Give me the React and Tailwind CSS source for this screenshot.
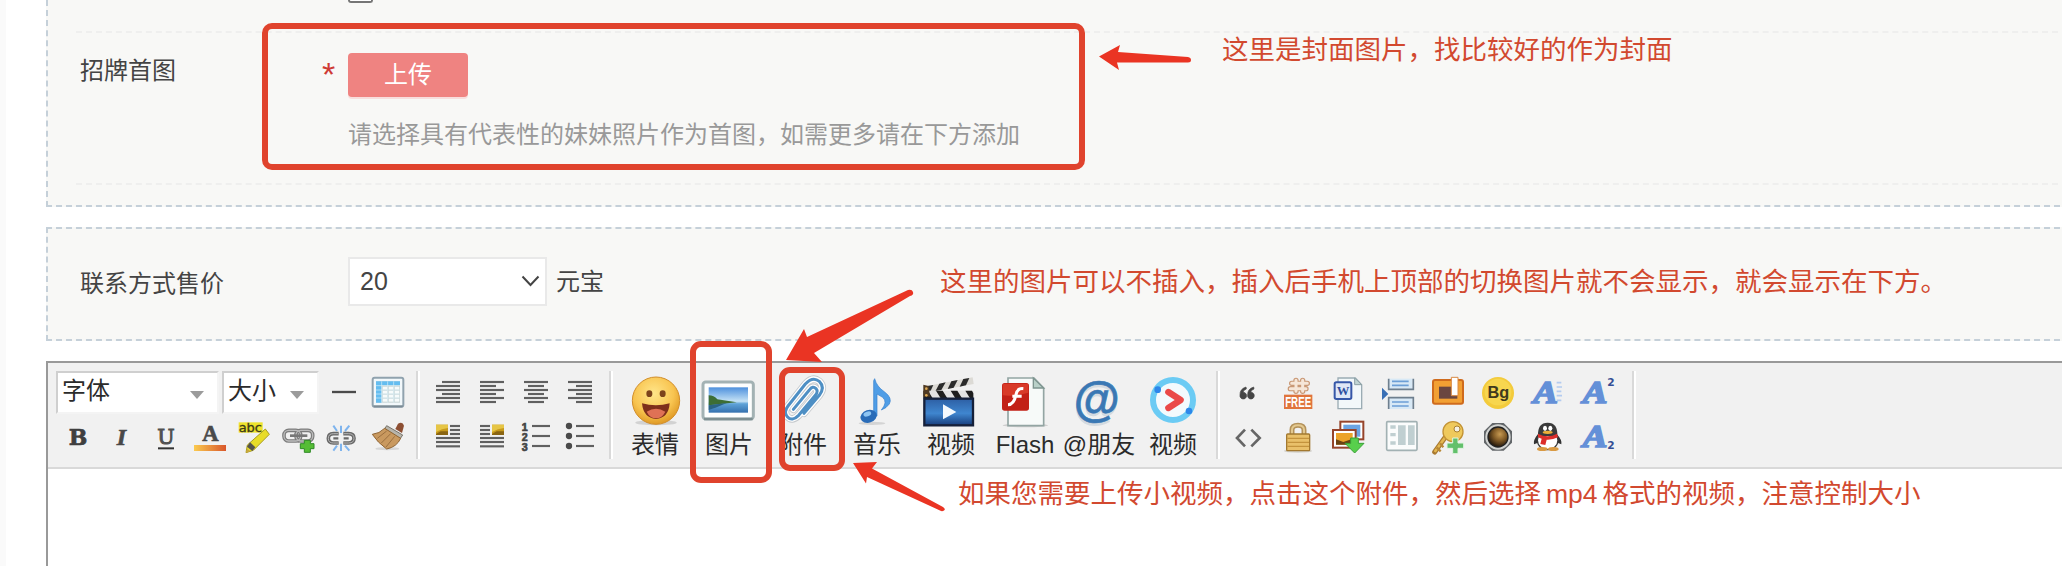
import React from "react";

function Cell({ box, w = "w-11", children }) {
  return (
    <button type="button" className={`${w} h-11 shrink-0`}>
      <svg viewBox={box} className="block h-full w-full">
        {children}
      </svg>
    </button>
  );
}

function BigButton({ label, box, children }) {
  return (
    <button type="button" className="flex w-[74px] shrink-0 flex-col items-center">
      <svg viewBox={box} className="block h-[58px] w-[74px]">
        {children}
      </svg>
      <span className="whitespace-nowrap text-2xl leading-[31px] text-[#2b2b2b]">{label}</span>
    </button>
  );
}

function Separator({ className }) {
  return <div className={`h-[88px] w-1 shrink-0 border-l-2 border-r-2 border-l-[#d9d9d9] border-r-white ${className}`} />;
}

function Combo({ label, className }) {
  return (
    <div
      className={`flex h-[43px] shrink-0 items-center justify-between border-2 border-b-[#f4f4f4] border-l-[#cfcfcf] border-r-[#f4f4f4] border-t-[#cfcfcf] bg-white pl-1 pr-[13px] ${className}`}
    >
      <span className="-mt-1 text-2xl leading-8 text-[#2b2b2b]">{label}</span>
      <svg viewBox="0 0 14 8" className="mt-1 h-2 w-3.5">
        <path d="M0 0H14L7 8Z" fill="#9b9b9b" />
      </svg>
    </div>
  );
}

function Lines({ rows }) {
  return rows.map(([x1, x2, y]) => (
    <path key={`${x1}-${y}`} d={`M${x1} ${y}H${x2}`} stroke="#606060" strokeWidth="6.5" />
  ));
}

const serif = "DejaVu Serif, serif";

function TextTools() {
  return (
    <div className="flex flex-col">
      <div className="flex h-11">
        <Combo label="字体" className="w-[163px]" />
        <Combo label="大小" className="ml-[3px] w-[97px]" />
        <div className="ml-[3px] flex">
          <Cell box="846 48 132 132">
            <path d="M876 111H948" stroke="#4b4b4b" strokeWidth="7" />
          </Cell>
          <Cell box="978 48 132 132">
            <rect x="998" y="68" width="92" height="87" rx="6" fill="#f2f8fb" stroke="#90a2ae" strokeWidth="6" />
            <path d="M1001 154H1088" stroke="#7c8b95" strokeWidth="6" />
            <rect x="1008" y="79" width="72" height="64" fill="#c6d3d3" />
            <path d="M1008 79H1080V91H1025V143H1008Z" fill="#64bdf0" />
            {[1028, 1046, 1064].map((x) =>
              [95, 107, 119, 131].map((y) => <rect key={`${x}${y}`} x={x} y={y} width="14" height="9" fill="#f7fbfb" />)
            )}
            <path d="M1025 79V143M1043 79V143M1061 79V143M1008 92H1080M1008 105H1080M1008 117H1080M1008 129H1080" stroke="#d8eef8" strokeWidth="2" />
          </Cell>
        </div>
      </div>
      <div className="flex h-11">
        <Cell box="48 180 132 132">
          <text x="114" y="270" fontSize="66" fontWeight="700" fontFamily={serif} textAnchor="middle" fill="#3f3f3f" stroke="#3f3f3f" strokeWidth="2">B</text>
        </Cell>
        <Cell box="180 180 132 132">
          <text x="244" y="270" fontSize="72" fontStyle="italic" fontWeight="700" fontFamily="Liberation Serif, serif" textAnchor="middle" fill="#484848" stroke="#484848" strokeWidth="2">I</text>
        </Cell>
        <Cell box="312 180 132 132">
          <text x="378" y="268" fontSize="62" fontFamily={serif} textAnchor="middle" fill="#505050" stroke="#505050" strokeWidth="3">U</text>
          <path d="M354 280H402" stroke="#333" strokeWidth="6" />
        </Cell>
        <Cell box="444 180 132 132">
          <defs>
            <linearGradient id="ink">
              <stop stopColor="#fbcb4f" />
              <stop offset="1" stopColor="#d9572b" />
            </linearGradient>
          </defs>
          <text x="511" y="259" fontSize="68" fontWeight="700" fontFamily="Liberation Serif, serif" textAnchor="middle" fill="#4a4a4a" stroke="#4a4a4a" strokeWidth="2">A</text>
          <rect x="462" y="270" width="96" height="18" fill="url(#ink)" />
        </Cell>
        <Cell box="576 180 132 132">
          <path d="M596 202H668V233H596Z" fill="#efe32c" />
          <text x="631" y="232" fontSize="38" fontFamily="DejaVu Sans, sans-serif" textAnchor="middle" fill="#3d3a18" stroke="#3d3a18" textLength="70" lengthAdjust="spacingAndGlyphs">abc</text>
          <path d="M676 222L688 238L640 286L618 293L622 270Z" fill="#e8dc28" stroke="#a89d22" strokeWidth="3" />
          <path d="M630 262L646 277L637 288L621 275Z" fill="#55534d" />
          <path d="M618 293L622 281L631 289Z" fill="#c9a640" />
        </Cell>
        <Cell box="708 180 132 132">
          <g fill="none">
            <rect x="732" y="226" width="50" height="32" rx="14" stroke="#7c7c7c" strokeWidth="11" />
            <rect x="768" y="226" width="50" height="32" rx="14" stroke="#7c7c7c" strokeWidth="11" />
            <rect x="732" y="226" width="50" height="32" rx="14" stroke="#bcbcbc" strokeWidth="4" />
            <rect x="768" y="226" width="50" height="32" rx="14" stroke="#bcbcbc" strokeWidth="4" />
            <path d="M750 242H802" stroke="#777" strokeWidth="8" />
          </g>
          <path d="M793 256H811V266H822V281H811V292H793V281H781V266H793Z" fill="#55bd35" stroke="#2f8a26" strokeWidth="3" />
        </Cell>
        <Cell box="840 180 132 132">
          <path d="M903 234V212M891 228L880 212M915 228L928 212M903 266V288M891 272L880 287M915 272L928 287" stroke="#7eb4ee" strokeWidth="6" />
          <g fill="none" stroke="#686868" strokeWidth="11">
            <path d="M896 236H880Q865 236 865 250T880 264H896M910 236H926Q942 236 942 250T926 264H910" />
            <path d="M880 250H895M911 250H926" strokeWidth="7" />
          </g>
          <path d="M894 236H880Q865 236 865 250T880 264H894M912 236H926Q942 236 942 250T926 264H912" fill="none" stroke="#b5b5b5" strokeWidth="3" />
        </Cell>
        <Cell box="972 180 132 132">
          <ellipse cx="1042" cy="281" rx="36" ry="5" fill="#d6d6d6" />
          <path d="M1066 222L1074 206Q1088 198 1092 212L1086 234Z" fill="#8d4f33" />
          <path d="M1040 212L1088 240L1080 252L1034 222Z" fill="#b8b5ab" stroke="#77736a" strokeWidth="3" />
          <path d="M1034 220L1082 250Q1070 276 1040 282Q1012 262 997 238Q1018 236 1034 220Z" fill="#c9995f" stroke="#8f6433" strokeWidth="3" />
          <path d="M1040 228L1012 250M1052 236L1024 264M1064 244L1038 276" stroke="#9c7040" strokeWidth="3" />
        </Cell>
      </div>
    </div>
  );
}

function ImageThumb({ x }) {
  return (
    <>
      <rect x={x} y="284" width="36" height="31" fill="#c79a1c" />
      <path d={`M${x} 284H${x + 36}V294L${x + 18} 298L${x} 306Z`} fill="#e6c545" />
      <path d={`M${x} 312L${x + 14} 304H${x + 36}V315H${x}Z`} fill="#8a6512" />
    </>
  );
}

function ParagraphTools() {
  return (
    <div className="flex flex-col">
      <div className="flex h-11">
        <Cell box="78 123 132 132">
          <Lines rows={[[126, 180, 156], [108, 180, 168], [108, 180, 180], [126, 180, 192], [108, 180, 204], [108, 180, 216]]} />
        </Cell>
        <Cell box="210 123 132 132">
          <Lines rows={[[240, 312, 156], [240, 288, 168], [240, 312, 180], [240, 288, 192], [240, 312, 204], [240, 288, 216]]} />
        </Cell>
        <Cell box="342 123 132 132">
          <Lines rows={[[372, 444, 156], [384, 432, 168], [372, 444, 180], [384, 432, 192], [372, 444, 204], [384, 432, 216]]} />
        </Cell>
        <Cell box="474 123 132 132">
          <Lines rows={[[504, 576, 156], [528, 576, 168], [504, 576, 180], [528, 576, 192], [504, 576, 204], [528, 576, 216]]} />
        </Cell>
      </div>
      <div className="flex h-11">
        <Cell box="78 255 132 132">
          <ImageThumb x={108} />
          <Lines rows={[[150, 180, 288], [150, 180, 300], [150, 180, 312], [108, 180, 324], [108, 180, 336], [108, 180, 349]]} />
        </Cell>
        <Cell box="210 255 132 132">
          <ImageThumb x={276} />
          <Lines rows={[[240, 270, 288], [240, 270, 300], [240, 270, 312], [240, 312, 324], [240, 312, 336], [240, 312, 349]]} />
        </Cell>
        <Cell box="342 255 132 132">
          <g fontSize="32" fontWeight="700" fontFamily="Liberation Sans, sans-serif" fill="#444" stroke="#444" strokeWidth="2">
            <text x="365" y="302">1</text>
            <text x="365" y="332">2</text>
            <text x="365" y="362">3</text>
          </g>
          <Lines rows={[[396, 450, 288], [396, 450, 318], [396, 450, 348]]} />
        </Cell>
        <Cell box="474 255 132 132">
          {[288, 318, 348].map((y) => (
            <circle key={y} cx="507" cy={y} r="9.5" fill="#4a4a4a" />
          ))}
          <Lines rows={[[528, 582, 288], [528, 582, 318], [528, 582, 348]]} />
        </Cell>
      </div>
    </div>
  );
}

const clip =
  "M520 238L568 180Q578 166 588 176Q596 184 586 196L536 256Q516 276 502 260Q490 246 504 228L556 162Q578 138 598 154Q616 172 598 196L552 250";

function MediaTools() {
  return (
    <div className="flex">
      <BigButton label="表情" box="-6 123 222 174">
        <defs>
          <radialGradient id="face" cx=".45" cy=".35" r=".65">
            <stop stopColor="#ffe68a" />
            <stop offset=".65" stopColor="#f8c450" />
            <stop offset="1" stopColor="#e09a25" />
          </radialGradient>
        </defs>
        <ellipse cx="108" cy="278" rx="62" ry="8" fill="#d2d2d2" />
        <circle cx="108" cy="212" r="71" fill="url(#face)" stroke="#d28e2a" strokeWidth="3" />
        <ellipse cx="88" cy="191" rx="9" ry="10" fill="#7c431b" />
        <ellipse cx="128" cy="191" rx="9" ry="10" fill="#7c431b" />
        <path d="M66 220Q108 232 149 220Q146 264 108 267Q70 264 66 220Z" fill="#7e2f1b" />
        <path d="M80 245Q108 228 136 245Q126 265 108 265Q90 265 80 245Z" fill="#df7155" />
      </BigButton>
      <BigButton label="图片" box="216 123 222 174">
        <defs>
          <linearGradient id="sky" x2="0" y2="1">
            <stop stopColor="#4d90dd" />
            <stop offset=".55" stopColor="#c5e2f5" />
            <stop offset=".65" stopColor="#5fa3d8" />
            <stop offset="1" stopColor="#3470ae" />
          </linearGradient>
        </defs>
        <rect x="249" y="156" width="151" height="111" rx="8" fill="#fdfefe" stroke="#a3b2b4" strokeWidth="9" />
        <path d="M252 267H398" stroke="#7e8f92" strokeWidth="7" />
        <rect x="266" y="172" width="118" height="76" fill="url(#sky)" />
        <path d="M266 196Q282 196 292 208L350 217L266 226Z" fill="#3d6e35" />
        <path d="M266 226L320 219L290 232L266 240Z" fill="#2b6385" />
      </BigButton>
      <BigButton label="附件" box="438 123 222 174">
        <g fill="none" strokeLinecap="round" strokeLinejoin="round">
          <path d={clip} stroke="#c4c8cc" strokeWidth="22" />
          <path d={clip} stroke="#fff" strokeWidth="17" />
          <path d={clip} stroke="#4e8fc4" strokeWidth="9" />
        </g>
      </BigButton>
      <BigButton label="音乐" box="0 273 222 174">
        <ellipse cx="96" cy="430" rx="40" ry="5" fill="#d4d4d4" />
        <path d="M104 296Q110 320 134 336Q158 354 148 372Q140 384 124 390Q144 366 128 352L111 342V408H101V302Z" fill="#4f9de6" stroke="#3581cf" strokeWidth="2" />
        <ellipse cx="86" cy="409" rx="25" ry="19" transform="rotate(-18 86 409)" fill="#2a6cb8" />
        <ellipse cx="82" cy="402" rx="12" ry="7" transform="rotate(-18 82 402)" fill="#8ec5f3" />
      </BigButton>
      <BigButton label="视频" box="222 273 222 174">
        <defs>
          <linearGradient id="clap" x2="0" y2="1">
            <stop stopColor="#2d5fa4" />
            <stop offset=".55" stopColor="#3f86cf" />
            <stop offset="1" stopColor="#173d7c" />
          </linearGradient>
        </defs>
        <path d="M250 320L398 292L401 312L253 340Z" fill="#dcdad5" />
        <path d="M262 318L280 315L270 337L253 340ZM298 311L317 307L304 330L286 334ZM334 304L353 300L341 323L323 327ZM370 297L388 294L378 316L359 320Z" fill="#2b2b2b" />
        <rect x="250" y="332" width="150" height="23" fill="#e2e2e2" />
        <path d="M250 332H264L278 355H250ZM288 332H308L322 355H302ZM332 332H352L366 355H346ZM376 332H396L400 340V355H390Z" fill="#1e1e1e" />
        <path d="M250 314L266 318L270 350H250Z" fill="#4f3a24" />
        <circle cx="259" cy="326" r="4" fill="#dfab55" />
        <circle cx="259" cy="346" r="4" fill="#dfab55" />
        <rect x="253" y="356" width="146" height="80" fill="url(#clap)" stroke="#15203a" strokeWidth="7" />
        <path d="M309 373L349 396L309 418Z" fill="#f4f9fd" />
      </BigButton>
      <BigButton label="Flash" box="444 273 222 174">
        <ellipse cx="556" cy="436" rx="68" ry="6" fill="#cfcfcf" />
        <path d="M504 294H582L611 324V437H504Z" fill="#f7faf9" stroke="#93a5a3" strokeWidth="5" />
        <path d="M580 294V324H611Z" fill="#b9d0c8" stroke="#7d948f" strokeWidth="4" />
        <rect x="486" y="309" width="81" height="83" rx="8" fill="#c22016" />
        <path d="M494 311H560Q565 311 565 318V338Q525 350 488 346V318Q488 311 494 311Z" fill="#d83a28" />
        <path d="M550 326Q532 324 528 344Q522 374 504 374M517 349H545" fill="none" stroke="#fff" strokeWidth="9" />
      </BigButton>
      <BigButton label="@朋友" box="666 273 222 174">
        <text x="770" y="416" fontSize="146" fontWeight="700" fontFamily="Liberation Sans, sans-serif" textAnchor="middle" fill="#d4dbe1" textLength="140" lengthAdjust="spacingAndGlyphs">@</text>
        <text x="770" y="408" fontSize="144" fontWeight="700" fontFamily="Liberation Sans, sans-serif" textAnchor="middle" fill="#3a78b4" stroke="#3a78b4" strokeWidth="2" textLength="138" lengthAdjust="spacingAndGlyphs">@</text>
      </BigButton>
      <BigButton label="视频" box="888 273 222 174">
        <circle cx="999" cy="360" r="60" fill="#f3fafd" stroke="#6bcbf4" strokeWidth="18" />
        <circle cx="953" cy="329" r="10" fill="#2d87ea" />
        <circle cx="1047" cy="393" r="10" fill="#2d87ea" />
        <path d="M985 336L1022 360L985 384" fill="none" stroke="#ea4a49" strokeWidth="19" strokeLinecap="round" strokeLinejoin="round" />
      </BigButton>
    </div>
  );
}

function StyledA({ x = 0, y = 0 }) {
  return (
    <text x={525 + x} y={128 + y} fontSize="94" fontWeight="700" fontStyle="italic" fontFamily="Liberation Serif, serif" textAnchor="middle" fill="#6490d8" stroke="#6490d8" strokeWidth="5" textLength="74" lengthAdjust="spacingAndGlyphs">
      A
    </text>
  );
}

function PluginTools() {
  return (
    <div className="flex flex-col">
      <div className="flex h-11">
        <Cell w="w-[50px]" box="6 33 150 132">
          <path d="M78 81Q59 87 60 105A10 10 0 1 0 69 97Q70 90 79 87ZM101 81Q82 87 83 105A10 10 0 1 0 92 97Q93 90 102 87Z" fill="#454545" stroke="#454545" strokeWidth="2" />
        </Cell>
        <Cell w="w-[50px]" box="156 33 150 132">
          <g fill="none" stroke="#c99875" strokeWidth="16" strokeLinecap="round">
            <path d="M228 61V94M248 61V94M215 70H262M211 86H258" />
          </g>
          <g fill="none" stroke="#f6e6d8" strokeWidth="9" strokeLinecap="round">
            <path d="M228 61V94M248 61V94M215 70H262M211 86H258" />
          </g>
          <rect x="192" y="104" width="85" height="43" fill="#e0743c" />
          <text x="234.5" y="141" fontSize="44" fontWeight="700" fontFamily="Liberation Sans, sans-serif" textAnchor="middle" fill="#fff" textLength="78" lengthAdjust="spacingAndGlyphs">FREE</text>
        </Cell>
        <Cell w="w-[50px]" box="306 33 150 132">
          <path d="M354 54H406L425 74V146H354Z" fill="#f2f8fa" stroke="#9bacb4" strokeWidth="4" />
          <path d="M404 54V74H425Z" fill="#c1d5d4" stroke="#8ca1a5" strokeWidth="3" />
          <rect x="344" y="67" width="50" height="50" rx="5" fill="#dfe7f6" stroke="#3657a8" strokeWidth="6" />
          <text x="369" y="106" fontSize="40" fontWeight="700" fontFamily="Liberation Serif, serif" textAnchor="middle" fill="#2f4f9f" textLength="38" lengthAdjust="spacingAndGlyphs">W</text>
        </Cell>
        <Cell w="w-[50px]" box="456 33 150 132">
          <path d="M507 56H578V87H507Z" fill="#d8e9f6" />
          <path d="M506 56V88H580V56" fill="none" stroke="#6e7f8e" strokeWidth="5" />
          <path d="M516 64H566M516 76H566" stroke="#6c9fd6" strokeWidth="5" />
          <path d="M507 114H578V147H507Z" fill="#d8e9f6" />
          <path d="M506 147V113H580V147" fill="none" stroke="#6e7f8e" strokeWidth="5" />
          <path d="M516 126H566M516 138H566" stroke="#6c9fd6" strokeWidth="5" />
          <path d="M486 83L505 102L486 120Z" fill="#396fb5" />
        </Cell>
        <Cell w="w-[50px]" box="6 33 150 132">
          <rect x="39" y="60" width="90" height="71" rx="6" fill="#f2a033" stroke="#cf6b1d" strokeWidth="6" />
          <rect x="57" y="80" width="55" height="36" fill="#6a4640" />
          <path d="M94 52H114V107H94Z" fill="#fff" stroke="#d98a45" strokeWidth="3" />
        </Cell>
        <Cell w="w-[50px]" box="156 33 150 132">
          <circle cx="234" cy="99" r="48" fill="#f3cb3c" />
          <circle cx="234" cy="96" r="40" fill="#f7d64f" />
          <text x="235" y="115" fontSize="49" fontWeight="700" fontFamily="Liberation Sans, sans-serif" textAnchor="middle" fill="#40391d">Bg</text>
        </Cell>
        <Cell w="w-[50px]" box="306 33 150 132">
          <StyledA x={-148} />
          <path d="M410 68H424M410 81H426M410 94H424M410 107H426M410 121H424" stroke="#b3cbf0" strokeWidth="5" />
        </Cell>
        <Cell w="w-[50px]" box="456 33 150 132">
          <StyledA />
          <text x="573" y="79" fontSize="32" fontWeight="700" fontFamily="DejaVu Sans, sans-serif" textAnchor="middle" fill="#344e94">2</text>
        </Cell>
      </div>
      <div className="flex h-11">
        <Cell w="w-[50px]" box="6 165 150 132">
          <path d="M75 209L51 234L75 259M94 209L119 234L94 259" fill="none" stroke="#666" strokeWidth="8" />
        </Cell>
        <Cell w="w-[50px]" box="156 165 150 132">
          <ellipse cx="234" cy="273" rx="42" ry="5" fill="#d2d0ca" />
          <path d="M216 226V210Q216 196 234 196T252 210V226" fill="none" stroke="#b3915a" strokeWidth="15" />
          <path d="M216 226V210Q216 196 234 196T252 210V226" fill="none" stroke="#e3c990" strokeWidth="6" />
          <rect x="200" y="222" width="69" height="50" rx="3" fill="#e9c06a" stroke="#a37930" strokeWidth="4" />
          <path d="M202 235H267M202 247H267M202 259H267" stroke="#c4933d" strokeWidth="4" />
        </Cell>
        <Cell w="w-[50px]" box="306 165 150 132">
          <rect x="361" y="185" width="69" height="53" fill="#fff" stroke="#96442b" strokeWidth="6" />
          <rect x="370" y="194" width="51" height="36" fill="#6ca4e2" />
          <rect x="339" y="210" width="68" height="53" fill="#fff" stroke="#96442b" strokeWidth="6" />
          <rect x="348" y="219" width="50" height="35" fill="#eca32a" />
          <path d="M348 238L370 246L398 236V254H348Z" fill="#6a4212" />
          <path d="M392 234H415V250H432L404 279L375 250H392Z" fill="#58cf4c" stroke="#38a036" strokeWidth="3" />
        </Cell>
        <Cell w="w-[50px]" box="456 165 150 132">
          <rect x="500" y="185" width="91" height="86" rx="3" fill="#fbfcfc" stroke="#a2b1b3" strokeWidth="5" />
          <path d="M511 196H527V206H511ZM511 219H527V229H511ZM511 244H527V254H511ZM534 196H557V255H534ZM564 196H584V255H564Z" fill="#c0cfd1" />
        </Cell>
        <Cell w="w-[50px]" box="6 165 150 132">
          <path d="M80 226L44 276" stroke="#a97a31" strokeWidth="15" strokeLinecap="round" />
          <path d="M80 226L46 273" stroke="#e4b750" strokeWidth="8" strokeLinecap="round" />
          <path d="M50 262L62 274M60 250L70 262" stroke="#b98936" strokeWidth="7" />
          <circle cx="99" cy="215" r="30" fill="#efc95c" stroke="#c39335" strokeWidth="4" />
          <circle cx="111" cy="207" r="9" fill="#f5f1e4" stroke="#a97f31" strokeWidth="3" />
          <path d="M98 234H114V249H131V265H114V281H98V265H81V249H98Z" fill="#62c06b" stroke="#e3f3e3" strokeWidth="3" />
        </Cell>
        <Cell w="w-[50px]" box="156 165 150 132">
          <defs>
            <radialGradient id="lens" cx=".6" cy=".35" r=".7">
              <stop stopColor="#c79a52" />
              <stop offset=".5" stopColor="#805a26" />
              <stop offset="1" stopColor="#20150a" />
            </radialGradient>
          </defs>
          <path d="M217 189H251L276 214V248L251 272H217L192 248V214Z" fill="#626669" />
          <circle cx="234" cy="231" r="35" fill="#222" stroke="#d2d4d2" strokeWidth="6" />
          <circle cx="234" cy="231" r="28" fill="url(#lens)" />
        </Cell>
        <Cell w="w-[50px]" box="306 165 150 132">
          <path d="M354 222Q339 240 342 253L358 247ZM410 222Q427 240 424 253L408 247Z" fill="#333" />
          <ellipse cx="383" cy="241" rx="31" ry="28" fill="#fff" stroke="#3a3a3a" strokeWidth="4" />
          <path d="M354 228Q352 188 383 188T412 228Z" fill="#3b3b3b" />
          <ellipse cx="375" cy="205" rx="6" ry="8" fill="#fff" />
          <ellipse cx="391" cy="205" rx="6" ry="8" fill="#fff" />
          <ellipse cx="383" cy="217" rx="15" ry="5" fill="#edaf38" />
          <path d="M354 221Q383 236 411 221L414 232Q398 240 380 239L376 255L361 252L365 236L354 232Z" fill="#dc2e2a" />
          <ellipse cx="367" cy="267" rx="16" ry="6" fill="#d99a43" />
          <ellipse cx="400" cy="267" rx="16" ry="6" fill="#d99a43" />
        </Cell>
        <Cell w="w-[50px]" box="456 165 150 132">
          <StyledA y={132} />
          <text x="573" y="267" fontSize="32" fontWeight="700" fontFamily="DejaVu Sans, sans-serif" textAnchor="middle" fill="#344e94">2</text>
        </Cell>
      </div>
    </div>
  );
}

function Annotations() {
  const note = "absolute whitespace-nowrap text-[26.5px] leading-9 text-[#d2492f]";
  return (
    <div className="pointer-events-none absolute inset-0">
      <div className="absolute left-[262px] top-[23px] h-[147px] w-[823px] rounded-[10px] border-[6px] border-[#e0432d]" />
      <div className="absolute left-[690px] top-[341px] h-[142px] w-[82px] rounded-[11px] border-[6px] border-[#e0432d]" />
      <div className="absolute left-[779px] top-[367px] h-[104px] w-[66px] rounded-[11px] border-[6px] border-[#e0432d]" />
      <svg viewBox="0 0 2062 566" className="absolute inset-0 h-full w-full" fill="#ea3423">
        <path d="M1099 56.5L1120 45L1118 52L1188 57Q1191 57.5 1191 60T1188 62.5L1117 62.5L1119 70Z" />
        <path d="M786 360L804 329L807 337L908 290Q912 289 913 292T910 296L814 353L822 362Z" />
        <path d="M853 463L877 462L872 468.500L943 507Q946 509 944 510.500T940 510.500L867 477L866 483.500Z" />
      </svg>
      <p className={`${note} left-[1222px] top-[32px]`}>这里是封面图片，找比较好的作为封面</p>
      <p className={`${note} left-[940px] top-[264px]`}>这里的图片可以不插入，插入后手机上顶部的切换图片就不会显示，就会显示在下方。</p>
      <p className={`${note} left-[958px] top-[476px]`}>
        如果您需要上传小视频，点击这个附件，然后选择<span className="mx-[5px]">mp4</span>格式的视频，注意控制大小
      </p>
    </div>
  );
}

export default function App() {
  return (
    <div className="relative flex h-[566px] w-full overflow-hidden bg-white font-['Liberation_Sans','Noto_Sans_CJK_SC',sans-serif] text-2xl text-[#444]">
      <div className="w-1.5 shrink-0 bg-[#fafafa]" />
      <main className="flex min-w-0 flex-1 flex-col pl-10">
        <section className="-mr-2 flex h-[207px] shrink-0 flex-col border-2 border-t-0 border-dashed border-[#c5d0d9] bg-[#f8f8f6] pl-7">
          <div className="h-[33px] shrink-0 border-b-2 border-dashed border-[#efefee] pl-[272px]">
            <div className="h-[3px] w-[25px] rounded-b-[5px] border-2 border-t-0 border-[#767676] bg-white" />
          </div>
          <div className="flex h-[152px] shrink-0 border-b-2 border-dashed border-[#efefee] pl-1 pt-5">
            <span className="w-60 leading-9">招牌首图</span>
            <span className="w-7 pl-[2px] pt-[3px] text-[34px] leading-9 text-[#cf3a35]">*</span>
            <div className="flex flex-col">
              <button type="button" className="h-11 w-[120px] rounded bg-[#ef8381] leading-[44px] text-white shadow-[0_2px_0_#f8dedd]">
                上传
              </button>
              <p className="mt-5 leading-9 text-[#999]">请选择具有代表性的妹妹照片作为首图，如需更多请在下方添加</p>
            </div>
          </div>
        </section>

        <section className="-mr-2 mt-5 flex h-[114px] shrink-0 items-center border-2 border-dashed border-[#c5d0d9] bg-[#f8f8f6] pl-8">
          <span className="w-[268px]">联系方式售价</span>
          <div className="-mt-[5px] flex h-[49px] w-[199px] items-center justify-between border-2 border-[#e9e9e9] bg-white pl-2.5 pr-[5px]">
            <span className="text-[25px]">20</span>
            <svg viewBox="0 0 20 12" className="-mt-0.5 h-3 w-5" fill="none" stroke="#444" strokeWidth="2">
              <path d="M2.500 1.500L10.500 10L18.500 1.500" />
            </svg>
          </div>
          <span className="-mt-1 ml-[9px]">元宝</span>
        </section>

        <section className="-mr-2 mt-5 flex flex-1 flex-col border-l-2 border-t-2 border-[#999]">
          <div className="flex h-[106px] shrink-0 border-b-2 border-[#d9d9d9] bg-[#f1f1f1] pl-2 pt-2">
            <TextTools />
            <Separator className="ml-1.5" />
            <div className="ml-1.5">
              <ParagraphTools />
            </div>
            <Separator className="ml-[7px]" />
            <div className="ml-[5px]">
              <MediaTools />
            </div>
            <Separator className="ml-1.5" />
            <div className="ml-0.5">
              <PluginTools />
            </div>
            <Separator className="ml-2.5" />
          </div>
          <div className="flex-1 bg-white" />
        </section>
      </main>
      <Annotations />
    </div>
  );
}
